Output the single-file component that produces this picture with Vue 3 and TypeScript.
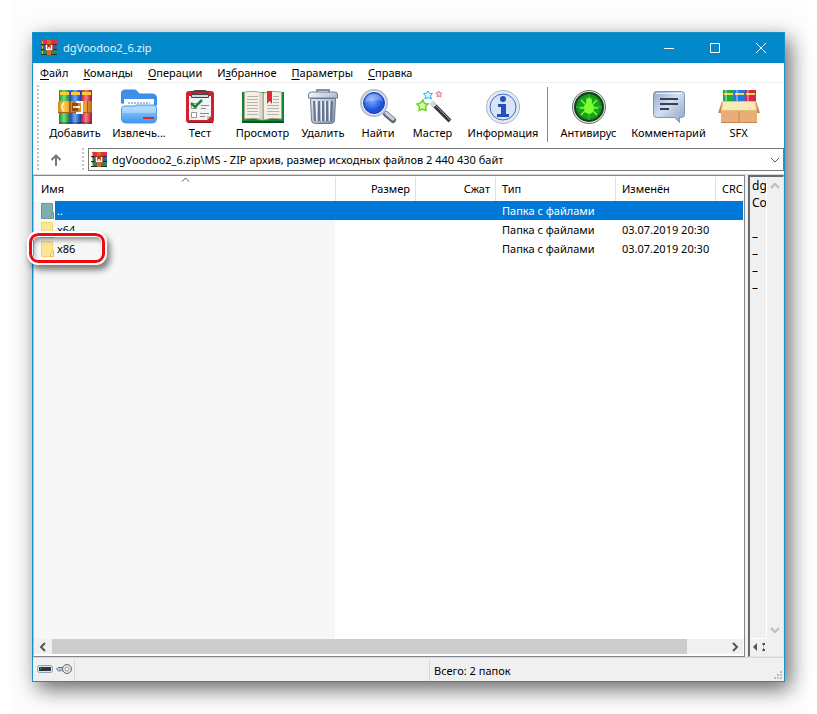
<script setup lang="ts">
import { ref } from 'vue'

interface Tool {
  id: string
  label: string
  width: number
}
interface Entry {
  name: string
  type: string
  modified: string
  parent?: boolean
}

const archive = 'dgVoodoo2_6.zip'
const menus = ['Файл', 'Команды', 'Операции', 'Избранное', 'Параметры', 'Справка']
const hot: Record<string, number> = { Избранное: 1 }
const split = (m: string) => {
  const i = hot[m] ?? 0
  return [m.slice(0, i), m.charAt(i), m.slice(i + 1)]
}
const groups: Tool[][] = [
  [
    { id: 'add', label: 'Добавить', width: 64 },
    { id: 'extract', label: 'Извлечь...', width: 64 },
    { id: 'test', label: 'Тест', width: 58 },
    { id: 'view', label: 'Просмотр', width: 67 },
    { id: 'delete', label: 'Удалить', width: 54 },
    { id: 'find', label: 'Найти', width: 56 },
    { id: 'wizard', label: 'Мастер', width: 53 },
    { id: 'info', label: 'Информация', width: 88 },
  ],
  [
    { id: 'scan', label: 'Антивирус', width: 75 },
    { id: 'comment', label: 'Комментарий', width: 85 },
    { id: 'sfx', label: 'SFX', width: 55 },
  ],
]
const entries: Entry[] = [
  { name: '..', type: 'Папка с файлами', modified: '', parent: true },
  { name: 'x64', type: 'Папка с файлами', modified: '03.07.2019 20:30' },
  { name: 'x86', type: 'Папка с файлами', modified: '03.07.2019 20:30' },
]
const selected = ref('..')
const notes = ['dg', 'Co', '', '–', '–', '–', '–']
</script>

<template>
  <main class="page">
    <div class="window">
      <header class="title">
        <svg class="logo" viewBox="0 0 16 16">
          <path fill="#e0313a" d="M1 0h15v4H1z" /><path fill="#4455b8" d="M1 5h15v4H1z" /><path fill="#16934a" d="M1 10h15v4H1z" />
          <path fill="#2b2b3c" d="M0 4h16v1H0zM0 9h16v1H0zM0 14h16v1H0z" />
          <path fill="#f4b52c" d="M1 1h1v3H1zM1 6h1v3H1zM1 11h1v3H1z" />
          <path fill="#d9681e" d="M6 0h4v15H6z" /><path fill="#a8331a" d="M4 4h8v7H4z" />
          <path fill="none" stroke="#fff" stroke-width="1.500" d="M5.500 5v4.500h5V5M8 7v2" />
        </svg>
        <h1>{{ archive }}</h1>
        <button class="cap" type="button" aria-label="Свернуть"><svg viewBox="0 0 12 12"><path d="M1 6.500h10" /></svg></button>
        <button class="cap" type="button" aria-label="Развернуть"><svg viewBox="0 0 12 12"><path d="M1.500 1.500h9v9h-9z" /></svg></button>
        <button class="cap" type="button" aria-label="Закрыть"><svg viewBox="0 0 12 12"><path d="M1 1l10 10M11 1L1 11" /></svg></button>
      </header>

      <nav class="menu">
        <button v-for="m in menus" :key="m" type="button">{{ split(m)[0] }}<u>{{ split(m)[1] }}</u>{{ split(m)[2] }}</button>
      </nav>

      <div class="tools">
        <span class="grip"></span>
        <div v-for="(g, gi) in groups" :key="gi" class="group">
          <button v-for="t in g" :key="t.id" type="button" class="tool" :style="{ width: t.width + 'px' }">
            <svg viewBox="0 0 36 36">
              <defs v-if="t.id === 'add'">
                <linearGradient id="gg"><stop offset="0" stop-color="#1d8a35" /><stop offset=".45" stop-color="#6fe07c" /><stop offset="1" stop-color="#15762c" /></linearGradient>
                <linearGradient id="gb"><stop offset="0" stop-color="#1847b5" /><stop offset=".45" stop-color="#6aa8ff" /><stop offset="1" stop-color="#173c9c" /></linearGradient>
                <linearGradient id="gr"><stop offset="0" stop-color="#b8142c" /><stop offset=".45" stop-color="#ff7a8c" /><stop offset="1" stop-color="#a91027" /></linearGradient>
                <linearGradient id="go"><stop offset="0" stop-color="#d08a22" /><stop offset=".2" stop-color="#ffc544" /><stop offset=".5" stop-color="#c4701b" /><stop offset=".8" stop-color="#f0a73a" /><stop offset="1" stop-color="#b9651a" /></linearGradient>
                <linearGradient id="gm" x2="1" y2="1"><stop offset="0" stop-color="#f6f8fb" /><stop offset=".5" stop-color="#b9c3d2" /><stop offset="1" stop-color="#77859b" /></linearGradient>
                <linearGradient id="gc" x2="1" y2="1"><stop offset="0" stop-color="#8fa6cc" /><stop offset=".45" stop-color="#d3def0" /><stop offset="1" stop-color="#8ba1c6" /></linearGradient>
                <linearGradient id="gf" x2="0" y2="1"><stop offset="0" stop-color="#a4d8ff" /><stop offset="1" stop-color="#3d95f0" /></linearGradient>
                <radialGradient id="gl" cx=".4" cy=".35"><stop offset="0" stop-color="#7fb2ff" /><stop offset="1" stop-color="#1f52dc" /></radialGradient>
                <radialGradient id="gv"><stop offset="0" stop-color="#1fc01f" /><stop offset="1" stop-color="#0a8a18" /></radialGradient>
              </defs>
              <g v-if="t.id === 'add'">
                <rect x="2" y="1" width="11" height="34" rx="1" fill="url(#gg)" /><rect x="13" y="1" width="11" height="34" rx="1" fill="url(#gb)" /><rect x="24" y="1" width="11" height="34" rx="1" fill="url(#gr)" />
                <path fill="#ffc93a" d="M3 3h9v3H3zM14 3h9v3h-9zM25 3h9v3h-9z" />
                <path fill="#000" d="M2 33h33v2H2z" opacity=".25" />
                <rect x="1" y="12" width="34" height="12" rx="1" fill="url(#go)" />
                <path fill="#a85c16" d="M1 23h34v1H1zM12 12h2v12h-2zM24 12h1v12h-1zM30 12h1v12h-1z" />
                <path fill="none" stroke="#fff3b0" stroke-width="2" d="M7 14q-4 4 0 8" />
                <path fill="#8a4c18" d="M15 14h6v8h-6z" /><path fill="#ffd060" d="M16 17h4v2h-4z" />
                <path fill="none" stroke="#f7f7f7" stroke-width="2" d="M19 13h6v11h-6M19 18h4" />
              </g>
              <g v-else-if="t.id === 'extract'">
                <path fill="#3f8fe8" stroke="#3c88e0" d="M.500 14V4q0-3 3-3h10q2 0 3 2t3 2h12q4 0 4 4v7z" />
                <path fill="#fff" d="M3 10h30v12H3z" /><path stroke="#b3bccb" stroke-dasharray="2 1" stroke-width="2" d="M7 14h22" />
                <path fill="url(#gf)" stroke="#4f9dec" d="M.500 20q0-3 3-3h10l2-1h17q3 0 3 3v11q0 4-4 4h-27q-4 0-4-4z" />
                <path fill="#fff" opacity=".3" d="M1 18h34v6H1z" /><path fill="#dc2a2a" d="M22 28h11v2H22z" />
              </g>
              <g v-else-if="t.id === 'test'">
                <rect x="4" y="2" width="28" height="32" rx="3" fill="#d3202e" /><path fill="#8d1220" d="M6 33h25v1H6z" />
                <path fill="#f4f4f6" d="M7 7h22v20l-4 4H7z" /><path fill="#bcbfc7" d="M29 27l-4 4v-4z" />
                <path fill="none" stroke="#444951" stroke-width="2" d="M11 7V4q0-2 3-2h8q3 0 3 2v3" /><path fill="#d1d5dc" stroke="#444" d="M9.500 5.500h17v3h-17z" />
                <path fill="#fff" stroke="#999" d="M9.500 14.500h5v5h-5zM9.500 23.500h5v5h-5z" /><path fill="none" stroke="#168c32" stroke-width="2.500" d="M9 14l4 4 7-7" />
                <path stroke="#888" d="M19 16.500h8M19 19.500h5M18 24.500h9M18 27.500h5" />
              </g>
              <g v-else-if="t.id === 'view'">
                <path fill="#128433" d="M-3 3h42v30H20l-2 1-2-1H-3z" /><path fill="#08551e" d="M-3 32h42v2H-3z" />
                <path fill="#f3f1e6" stroke="#aaa68f" d="M-.500 3q10-2 18 1v27q-8-3-18-1zM36.500 3q-10-2-18 1v27q8-3 18-1z" />
                <path fill="#d1cdbb" d="M14 3l4 1v27l-4-1z" opacity=".7" />
                <path stroke="#b4b5b0" d="M2 7.500h11M2 10.500h11M2 13.500h11M2 16.500h11M2 19.500h11M2 22.500h11M2 25.500h11M28 7.500h6M28 10.500h6M28 13.500h6M22 16.500h12M22 19.500h12M22 22.500h12M22 25.500h12" />
                <path fill="#e02b37" d="M22 2h5v13l-2.500-3-2.500 3z" />
              </g>
              <g v-else-if="t.id === 'delete'">
                <path fill="none" stroke="#8390a4" stroke-width="2" d="M12 4V1h12v3" />
                <path fill="url(#gm)" stroke="#6d7c92" d="M3.500 6q0-3 3-3h23q3 0 3 3v3h-29zM5.500 9.500h25l-1 22q0 3-4 3h-15q-4 0-4-3z" />
                <path stroke="#66758d" stroke-width="2" d="M9 12l1 20M14 12v20M18 12v20M22 12v20M27 12l-1 20" />
                <path stroke="#eef2f7" d="M11.500 12v20M16.500 12v20M20.500 12v20M24.500 12v20" />
              </g>
              <g v-else-if="t.id === 'find'">
                <path stroke="#5d6876" stroke-width="6" stroke-linecap="round" d="M26 25l7 6" /><path stroke="#c9d2dd" stroke-width="3" stroke-linecap="round" d="M26 24l7 6" />
                <circle cx="14" cy="14" r="13" fill="#edf2fa" stroke="#b5c1d2" stroke-width="2" /><circle cx="14" cy="14" r="10.500" fill="url(#gl)" stroke="#1b3ba6" />
                <path fill="#fff" opacity=".25" d="M5 13q1-8 9-8t9 7q-8-2-18 1" />
              </g>
              <g v-else-if="t.id === 'wizard'">
                <path stroke="#31363c" stroke-width="4" d="M17 14l18 18" /><path stroke="#9da3ab" stroke-width="1" d="M18 14l17 17" /><path stroke="#d5d8db" stroke-width="4" d="M16 13l4 4" />
                <path fill="#e0ff9a" stroke="#6ad42a" stroke-width="1.500" d="M8 11l1.500 3.500 3.500.5-2.500 2.500.5 4-3.500-1.500L4 21.500l.5-4L2 15l3.500-1z" />
                <path fill="#d2f6ff" stroke="#28b4dc" d="M13 2l1.500 2.500h3l-2 2.500 1 3L13 8.500 10 10l.5-3-2-2.500 3-.5z" />
                <path fill="#ffd4d4" stroke="#ee7b80" d="M24 2l1 2h2l-1.500 2 .5 2-2-1-2 1 .5-2L21 4l2-.5z" />
              </g>
              <g v-else-if="t.id === 'info'">
                <circle cx="18" cy="18" r="16.500" fill="#e4eaf3" stroke="#a9b5c8" /><circle cx="18" cy="18" r="13" fill="#dbe4f2" stroke="#3f6fc4" />
                <circle cx="18" cy="10" r="3" fill="#2252bd" /><path fill="#2252bd" d="M13 15h8v10h3v3H12v-3h4v-7h-3z" />
              </g>
              <g v-else-if="t.id === 'scan'">
                <circle cx="18" cy="18" r="16.500" fill="#dfe4df" stroke="#6d736d" /><circle cx="18" cy="18" r="14" fill="url(#gv)" stroke="#183b1c" stroke-width="2" />
                <path stroke="#6fed53" opacity=".6" d="M18 5v26M5 18h26" /><circle cx="18" cy="18" r="10" fill="none" stroke="#32aa2d" />
                <ellipse cx="18" cy="19" rx="5" ry="6" fill="#7bff32" /><circle cx="18" cy="12" r="3" fill="#7bff32" />
                <path fill="none" stroke="#7bff32" stroke-width="1.500" d="M14 15l-4-4M22 15l4-4M13 19H9M23 19h4M14 22l-4 4M22 22l4 4" />
              </g>
              <g v-else-if="t.id === 'comment'">
                <path fill="url(#gc)" stroke="#8296b8" d="M5.500 2.500h25q3 0 3 3v20q0 3-3 3h-2v5l-5-5h-18q-3 0-3-3v-20q0-3 3-3z" />
                <path stroke="#fff" opacity=".7" d="M5 4.500h26" /><path stroke="#354157" stroke-width="2" d="M9 10h18M9 15h18M9 20h9" />
              </g>
              <g v-else>
                <path fill="#20a746" d="M2 1h11v15H2z" /><path fill="#2376e2" d="M13 1h11v15H13z" /><path fill="#da263f" d="M24 1h11v15H24z" />
                <path fill="#ffd83f" d="M3 4h9v2H3zM14 4h9v2h-9zM25 4h9v2h-9z" /><path fill="#fff" opacity=".35" d="M4 1h2v14H4zM15 1h2v14h-2zM26 1h2v14h-2z" />
                <path fill="#cf854d" d="M1 12L-3 24H3zM35 12l4 12h-6z" /><path fill="#e9ad78" d="M0 20h36v14H0z" />
                <path fill="#fbe9b5" stroke="#e0bf80" d="M1.500 12.500h33l1 9H.500z" /><path stroke="#c98452" d="M18 22v12M0 33.500h36" />
              </g>
            </svg>
            <span>{{ t.label }}</span>
          </button>
        </div>
      </div>

      <div class="address">
        <span class="grip"></span>
        <button class="back" type="button" aria-label="Вверх"><svg viewBox="0 0 12 12"><path d="M6 12V2M1.500 6L6 1.500 10.500 6" /></svg></button>
        <span class="grip"></span>
        <div class="combo">
          <svg class="logo" viewBox="0 0 16 16">
            <path fill="#e0313a" d="M1 0h15v4H1z" /><path fill="#4455b8" d="M1 5h15v4H1z" /><path fill="#16934a" d="M1 10h15v4H1z" />
            <path fill="#2b2b3c" d="M0 4h16v1H0zM0 9h16v1H0zM0 14h16v1H0z" />
            <path fill="#f4b52c" d="M1 1h1v3H1zM1 6h1v3H1zM1 11h1v3H1z" />
            <path fill="#d9681e" d="M6 0h4v15H6z" /><path fill="#a8331a" d="M4 4h8v7H4z" />
            <path fill="none" stroke="#fff" stroke-width="1.500" d="M5.500 5v4.500h5V5M8 7v2" />
          </svg>
          <select aria-label="Путь"><option>{{ archive }}\MS - ZIP архив, размер исходных файлов 2 440 430 байт</option></select>
          <svg class="drop" viewBox="0 0 10 10"><path d="M1 3l4 4 4-4" /></svg>
        </div>
      </div>

      <div class="content">
        <section class="list">
          <div class="scroll">
            <table>
              <colgroup><col class="c-name" /><col class="c-num" /><col class="c-num" /><col class="c-type" /><col class="c-date" /><col /></colgroup>
              <thead>
                <tr>
                  <th>Имя<svg class="sort" viewBox="0 0 9 5"><path d="M1 4.500L4.500 1 8 4.500" /></svg></th>
                  <th class="num">Размер</th><th class="num">Сжат</th><th>Тип</th><th>Изменён</th><th>CRC</th>
                </tr>
              </thead>
              <tbody>
                <tr v-for="e in entries" :key="e.name" :class="{ selected: selected === e.name, parent: e.parent }" @click="selected = e.name">
                  <td><div class="name"><svg viewBox="0 0 14 16"><path class="sheet" d="M.500.500h11v15H.500z" /><path class="fold" d="M11.500 9.500h1v6h-3v-2z" /></svg><span>{{ e.name }}</span></div></td>
                  <td></td><td></td><td>{{ e.type }}</td><td>{{ e.modified }}</td><td></td>
                </tr>
              </tbody>
            </table>
          </div>
          <div class="hbar">
            <button type="button" aria-label="Влево"><svg viewBox="0 0 8 8"><path d="M6 0L2 4l4 4" /></svg></button>
            <span class="track"><span class="thumb"></span></span>
            <button type="button" aria-label="Вправо"><svg viewBox="0 0 8 8"><path d="M2 0l4 4-4 4" /></svg></button>
          </div>
        </section>
        <aside class="notes">
          <div class="text"><p v-for="(n, i) in notes" :key="i">{{ n }}</p></div>
          <div class="vbar">
            <svg viewBox="0 0 8 8"><path d="M0 6l4-4 4 4" /></svg>
            <svg viewBox="0 0 8 8"><path d="M0 2l4 4 4-4" /></svg>
          </div>
          <div class="mini"><svg viewBox="0 0 14 8"><path d="M5 0L1 4l4 4zM10 0h3v2h-1v4h1v2h-3l2-4z" /></svg></div>
        </aside>
      </div>

      <footer class="status">
        <div class="icons">
          <svg viewBox="0 0 16 10"><rect x=".5" y="1.5" width="15" height="7" rx="2" fill="#dce8f5" stroke="#8ba2bf" /><path fill="#303743" d="M2 3h12v4H2z" /><path fill="#4fcf65" d="M3 4h1v1H3z" /></svg>
          <svg viewBox="0 0 16 10"><path fill="#b9c4d4" stroke="#737983" d="M9 3.500H2L.500 5l2 2h2l1-1 1 1H9" /><circle cx="11" cy="5" r="4.500" fill="#e7e7e7" stroke="#666" /><circle cx="11" cy="5" r="2" fill="#fff" stroke="#999" /></svg>
        </div>
        <div></div>
        <div class="total">Всего: 2 папок</div>
        <svg class="size" viewBox="0 0 8 8"><path d="M6 0h2v2H6zM3 3h2v2H3zM6 3h2v2H6zM0 6h2v2H0zM3 6h2v2H3zM6 6h2v2H6z" /></svg>
      </footer>
      <span class="marker"></span>
    </div>
  </main>
</template>

<style>
body { margin: 0; background: #fff; }
</style>

<style scoped>
* { box-sizing: border-box; }
.page {
  min-height: 100vh; margin: 0 10px; padding: 32px 22px; display: flex; background: #fdfdfd;
  font: 11px/16px "Noto Sans", "Open Sans", sans-serif; color: #000;
}
button { font: inherit; color: inherit; background: none; border: 0; padding: 0; margin: 0; }
svg { display: block; flex: none; overflow: visible; }
.window {
  position: relative; flex: 1; min-width: 0; display: flex; flex-direction: column;
  border: 1px solid #1a90c9; background: #fff; box-shadow: 5px 7px 20px 0 rgba(0, 0, 0, .6);
}
.logo { width: 16px; height: 16px; }
.title { height: 30px; display: flex; align-items: center; background: #0388c9; color: #fff; padding-left: 8px; }
h1 { flex: 1; margin: 0 0 0 6px; font: inherit; color: #e6f5fc; }
.cap { width: 46px; height: 30px; display: grid; place-items: center; }
.cap svg { width: 12px; height: 12px; fill: none; stroke: #fff; stroke-width: 1; }
.menu { height: 20px; display: flex; gap: 15px; padding-left: 7px; border-bottom: 1px solid #f0f0f0; }
.menu button { line-height: 20px; white-space: nowrap; }
u { text-underline-offset: 2px; }
.tools { height: 63px; display: flex; padding-left: 4px; }
.grip { width: 2px; margin-top: 2px; background: repeating-linear-gradient(#c3c3c3 0 2px, #fff 2px 4px); }
.group { display: flex; }
.group:nth-child(2) { padding-left: 4px; border-right: 1px solid #8a8a8a; margin: 4px 3px 4px 0; }
.group:nth-child(3) { margin: 4px 0; }
.tool { display: flex; flex-direction: column; align-items: center; white-space: nowrap; padding-top: 2px; }
.tool svg { width: 36px; height: 36px; }
.tool span { line-height: 16px; }
.address { display: flex; height: 29px; padding: 2px 0 3px 4px; border-bottom: 1px solid #d8d8d8; }
.address .grip { margin: 0; }
.back { width: 43px; display: grid; place-items: center; padding-right: 10px; }
.back svg { width: 12px; height: 12px; fill: none; stroke: #777; stroke-width: 2; }
.combo { flex: 1; margin-left: 4px; display: flex; align-items: center; border: 1px solid #7a7a7a; padding: 0 3px 0 2px; }
.combo select { flex: 1; min-width: 0; appearance: none; border: 0; background: none; font: inherit; color: inherit; padding: 0 0 0 5px; outline: 0; }
.drop { width: 10px; height: 10px; fill: none; stroke: #555; }
.content { flex: 1; display: flex; gap: 3px; background: #f0f0f0; }
.list { flex: 1; min-width: 0; display: flex; flex-direction: column; border: 1px solid #828790; border-left-color: #bbb; background: #fff; padding: 1px 1px 2px 0; }
.scroll { flex: 1; min-height: 300px; overflow: hidden; background: linear-gradient(#f7f7f7, #f7f7f7) 0 0 / 301px 100% no-repeat; }
table { width: 100%; table-layout: fixed; border-collapse: separate; border-spacing: 0; }
.c-name { width: 302px; } .c-num { width: 80px; } .c-type { width: 120px; } .c-date { width: 100px; }
th { height: 24px; padding: 0 0 0 6px; font-weight: 400; text-align: left; background: #fff; border-right: 1px solid #e0e0e0; overflow: hidden; white-space: nowrap; position: relative; }
th:first-child { padding-left: 7px; }
th:last-child { border: 0; }
th.num { text-align: right; padding-right: 5px; }
.sort { position: absolute; width: 9px; height: 5px; left: 147px; top: 0; fill: none; stroke: #555; }
td { height: 19px; padding: 0 0 0 6px; white-space: nowrap; overflow: hidden; }
td:first-child { padding: 0 0 0 7px; }
.name { display: flex; height: 19px; align-items: center; }
.name svg { width: 14px; height: 16px; }
.name span { flex: 1; padding-left: 2px; line-height: 19px; }
.sheet { fill: #ffe694; stroke: #f6d667; } .fold { fill: #fff0b8; stroke: #eebd45; }
.parent .sheet { fill: #80adb1; stroke: #659b94; } .parent .fold { fill: #8db3a6; stroke: #679b86; }
.selected td { background: #0078d7; color: #fff; }
.selected td:first-child { background: linear-gradient(90deg, #f7f7f7 21px, #0078d7 21px); }
.hbar { display: flex; height: 15px; background: #f0f0f0; }
.hbar button { width: 17px; display: grid; place-items: center; }
.hbar svg { width: 8px; height: 8px; fill: none; stroke: #555; stroke-width: 2; }
.track { flex: 1; } .thumb { display: block; width: 94%; height: 100%; margin-left: 1px; background: #cdcdcd; }
.notes { width: 36px; display: grid; grid-template: 1fr 17px / 16px 1fr; border: 2px solid #696969; border-width: 2px 1px 1px 2px; border-right-color: #e3e3e3; border-bottom-color: #e3e3e3; }
.text { overflow: hidden; padding-left: 2px; border-bottom: 1px solid #fff; font-size: 12px; }
.notes p { margin: 0; height: 17px; line-height: 17px; overflow: hidden; }
.vbar { border-left: 1px solid #fff; display: flex; flex-direction: column; justify-content: space-between; align-items: center; padding: 5px 0 5px; }
.vbar svg { width: 8px; height: 8px; fill: none; stroke: #bdbdbd; stroke-width: 2; }
.mini { grid-column: 1 / -1; padding: 4px 0 0 2px; } .mini svg { width: 14px; height: 8px; fill: #555; }
.status { height: 24px; display: grid; grid-template-columns: 42px 1fr 354px; background: #f0f0f0; border-top: 1px solid #d7d7d7; position: relative; padding-top: 2px; }
.status > div { border-right: 1px solid #d7d7d7; line-height: 21px; }
.status .total { border: 0; padding-left: 4px; }
.icons { display: flex; gap: 3px; padding: 4px 0 0 4px; } .icons svg { width: 16px; height: 10px; }
.size { position: absolute; right: 2px; bottom: 2px; width: 8px; height: 8px; fill: #bfbfbf; }
.marker { position: absolute; left: -4px; top: 200px; width: 76px; height: 30px; border: 3px solid #f00a10; border-radius: 9px; outline: 2px solid #fff; box-shadow: 3px 5px 6px 2px rgba(0, 0, 0, .5), inset 0 0 0 1px #fff, inset 2px 4px 5px rgba(0, 0, 0, .4); pointer-events: none; }
</style>
